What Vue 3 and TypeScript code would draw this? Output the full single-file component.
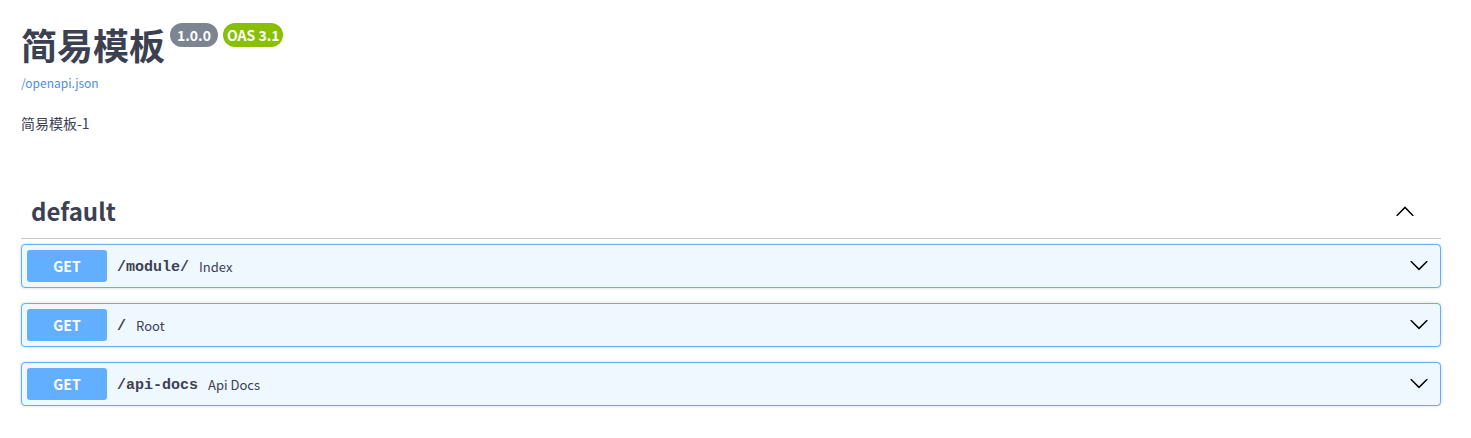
<script setup lang="ts">
import { ref } from 'vue'

interface Operation {
  method: string
  path: string
  summary: string
}

const operations: Operation[] = [
  { method: 'GET', path: '/module/', summary: 'Index' },
  { method: 'GET', path: '/', summary: 'Root' },
  { method: 'GET', path: '/api-docs', summary: 'Api Docs' },
]

const expanded = ref(true)
</script>

<template>
  <main class="docs">
    <header class="info">
      <div class="heading">
        <h1>简易模板</h1>
        <span class="badge">1.0.0</span>
        <span class="badge oas">OAS 3.1</span>
      </div>
      <a class="spec" href="/openapi.json">/openapi.json</a>
      <p class="description">简易模板-1</p>
    </header>

    <section>
      <h2 class="tag">
        <button type="button" class="tag-toggle" :aria-expanded="expanded" @click="expanded = !expanded">
          <span>default</span>
          <svg class="arrow" :class="{ closed: !expanded }" viewBox="0 0 20 20" aria-hidden="true">
            <path d="M17.418 14.908c.272.281.709.281.979 0s.271-.736 0-1.017L10.489 5.711a.68.68 0 0 0-.978 0L1.604 13.891c-.272.281-.272.736 0 1.017s.709.281.979 0L10 7.467z" />
          </svg>
        </button>
      </h2>
      <div v-if="expanded" class="operations">
        <button v-for="op in operations" :key="op.path" type="button" class="operation">
          <span class="method">{{ op.method }}</span>
          <span class="path">{{ op.path }}</span>
          <span class="summary">{{ op.summary }}</span>
          <svg class="arrow" viewBox="0 0 20 20" aria-hidden="true">
            <path d="M17.418 6.109c.272-.268.709-.268.979 0s.271.701 0 .969l-7.908 7.83a.697.697 0 0 1-.979 0l-7.908-7.83c-.271-.268-.271-.701 0-.969s.709-.268.979 0L10 13.25z" />
          </svg>
        </button>
      </div>
    </section>
  </main>
</template>

<style>
body {
  background: #fff;
}
</style>

<style scoped>
.docs {
  padding: 22px 30px 32px 21px;
  color: #3b4151;
  font-family: "Noto Sans CJK SC", "Noto Sans", sans-serif;
}
.heading {
  display: flex;
  align-items: flex-start;
  gap: 5px;
}
h1 {
  margin: 0;
  font-size: 36px;
  line-height: 44px;
}
.badge {
  margin-top: 1px;
  padding: 0 7px;
  border-radius: 12px;
  background: #7d8492;
  color: #fff;
  font-size: 14px;
  font-weight: 700;
  line-height: 24px;
}
.oas {
  padding: 0 4px;
  background: #89bf04;
}
.spec {
  display: block;
  width: fit-content;
  margin-top: 8px;
  color: #4990e2;
  font-size: 12px;
  line-height: 18px;
  text-decoration: none;
}
.description {
  margin: 20px 0 55px;
  font-size: 14px;
  line-height: 22px;
}
.tag {
  margin: 0 0 5px;
}
button {
  font-family: inherit;
  color: inherit;
  cursor: pointer;
  text-align: left;
}
.tag-toggle {
  display: flex;
  align-items: center;
  justify-content: space-between;
  width: 100%;
  height: 50px;
  padding: 0 26px 6px 10px;
  border: 0;
  border-bottom: 1px solid rgba(59, 65, 81, 0.3);
  background: none;
  font-size: 24px;
  font-weight: 700;
}
.arrow {
  width: 20px;
  height: 20px;
  flex: none;
}
.closed {
  transform: rotate(180deg);
}
.operations {
  display: flex;
  flex-direction: column;
  gap: 15px;
}
.operation {
  display: flex;
  align-items: center;
  gap: 10px;
  height: 44px;
  padding: 5px 11px 5px 5px;
  border: 1px solid #61affe;
  border-radius: 4px;
  background: #eff7ff;
  box-shadow: 0 0 3px rgba(0, 0, 0, 0.19);
}
.operation .arrow {
  margin-left: auto;
  margin-bottom: 2px;
}
.method {
  width: 80px;
  border-radius: 3px;
  background: #61affe;
  color: #fff;
  font-size: 14px;
  font-weight: 700;
  line-height: 32px;
  text-align: center;
}
.path {
  padding-top: 2px;
  font-family: "Liberation Mono", monospace;
  font-size: 15px;
  font-weight: 700;
}
.summary {
  font-size: 13px;
}
</style>
